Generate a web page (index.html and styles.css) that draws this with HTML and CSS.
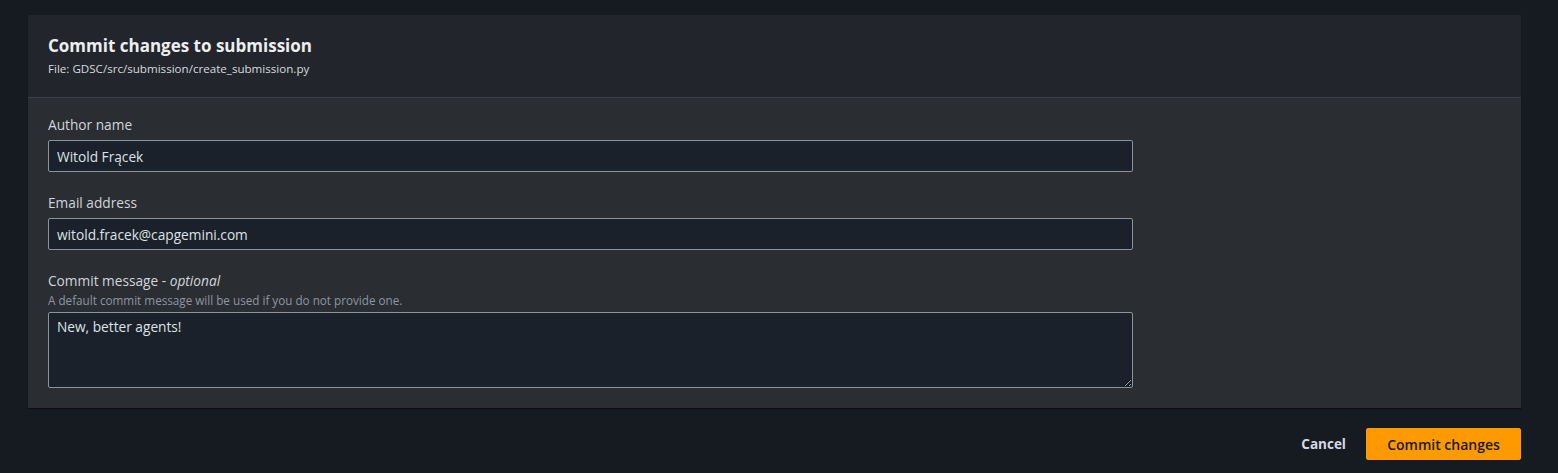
FILE: index.html
```html
<!DOCTYPE html>
<html lang="en">
<head>
<meta charset="utf-8">
<title>Commit changes to submission</title>
<link rel="stylesheet" href="styles.css">
</head>
<body>
<div class="page">
  <section class="card">
    <header class="card-header">
      <h2 class="title">Commit changes to submission</h2>
      <div class="subtitle">File: GDSC/src/submission/create_submission.py</div>
    </header>
    <div class="card-body">
      <div class="field">
        <label class="label" for="author">Author name</label>
        <input class="input" id="author" type="text" value="Witold Frącek">
      </div>
      <div class="field">
        <label class="label" for="email">Email address</label>
        <input class="input" id="email" type="text" value="witold.fracek@capgemini.com">
      </div>
      <div class="field">
        <label class="label" for="msg">Commit message - <i>optional</i></label>
        <div class="desc">A default commit message will be used if you do not provide one.</div>
        <textarea class="input textarea" id="msg">New, better agents!</textarea>
      </div>
    </div>
  </section>
  <div class="actions">
    <button class="btn btn-link">Cancel</button>
    <button class="btn btn-primary">Commit changes</button>
  </div>
</div>
</body>
</html>
```
FILE: styles.css
```css
html, body {
  margin: 0;
  padding: 0;
  background: #161a21;
  font-family: "Open Sans", "Noto Sans", Arial, sans-serif;
  color: #d1d5db;
}
.page {
  padding: 15px 37px 0 28px;
}
.card {
  background: #2a2d32;
  box-shadow: 0 1px 1px rgba(0,0,0,0.5);
}
.card-header {
  background: #22252b;
  padding: 20px 20px 20px;
  border-bottom: 1px solid #3c3f45;
}
.title {
  margin: 0;
  font-size: 17px;
  line-height: 21px;
  font-weight: 700;
  color: #eceef0;
}
.subtitle {
  margin-top: 5px;
  font-size: 11.6px;
  line-height: 16px;
  color: #d7dadf;
}
.card-body {
  padding: 16px 20px 20px;
  display: flex;
  flex-direction: column;
  gap: 20px;
}
.field {
  display: flex;
  flex-direction: column;
}
.label {
  font-size: 13.7px;
  line-height: 22px;
  color: #d1d5db;
  margin-bottom: 4px;
}
.label i {
  font-style: italic;
}
.desc {
  font-size: 11.7px;
  line-height: 16px;
  color: #8d96a3;
  margin-top: -4px;
  margin-bottom: 4px;
}
.input {
  box-sizing: border-box;
  width: 1085px;
  height: 32px;
  background: #1b212a;
  border: 1px solid #8a9499;
  border-radius: 2px;
  padding: 0 8px;
  font-family: inherit;
  font-size: 13.7px;
  color: #dde1e5;
  outline: none;
}
.textarea {
  height: 76px;
  padding: 4px 8px;
  line-height: 20px;
  resize: vertical;
  display: block;
}
.actions {
  margin-top: 20px;
  display: flex;
  justify-content: flex-end;
  align-items: center;
}
.btn {
  font-family: inherit;
  font-size: 13.5px;
  font-weight: 700;
  height: 32px;
  border-radius: 2px;
  cursor: pointer;
}
.btn-link {
  background: transparent;
  border: none;
  color: #d5dbe1;
  padding: 0 20px;
}
.btn-primary {
  background: #ff9900;
  border: 1px solid #ff9900;
  color: #16191f;
  width: 155px;
  padding: 0 10px;
  font-size: 14px;
  font-weight: 600;
}
```
